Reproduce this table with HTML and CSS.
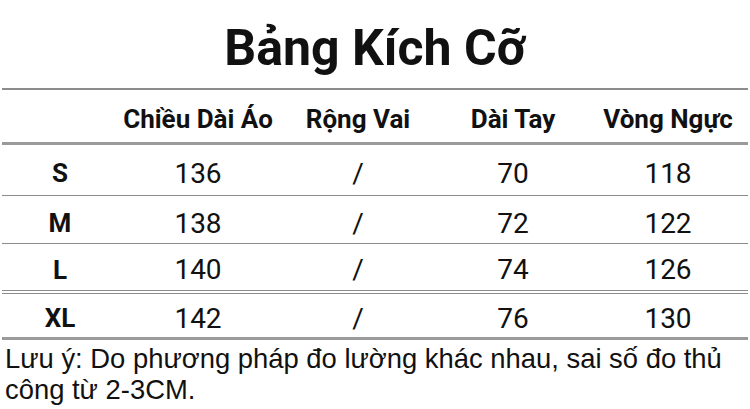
FILE: index.html
```html
<!DOCTYPE html>
<html lang="vi">
<head>
<meta charset="utf-8">
<title>Bảng Kích Cỡ</title>
<link rel="stylesheet" href="styles.css">
</head>
<body>
<div class="page">
  <h1 class="title">Bảng Kích Cỡ</h1>
  <div class="table">
    <div class="row row-head">
      <div class="cell"></div>
      <div class="cell">Chiều Dài Áo</div>
      <div class="cell">Rộng Vai</div>
      <div class="cell">Dài Tay</div>
      <div class="cell">Vòng Ngực</div>
    </div>
    <div class="row row-s">
      <div class="cell label">S</div>
      <div class="cell">136</div>
      <div class="cell">/</div>
      <div class="cell">70</div>
      <div class="cell">118</div>
    </div>
    <div class="row row-m">
      <div class="cell label">M</div>
      <div class="cell">138</div>
      <div class="cell">/</div>
      <div class="cell">72</div>
      <div class="cell">122</div>
    </div>
    <div class="row row-l">
      <div class="cell label">L</div>
      <div class="cell">140</div>
      <div class="cell">/</div>
      <div class="cell">74</div>
      <div class="cell">126</div>
    </div>
    <div class="row row-xl">
      <div class="cell label">XL</div>
      <div class="cell">142</div>
      <div class="cell">/</div>
      <div class="cell">76</div>
      <div class="cell">130</div>
    </div>
  </div>
  <p class="note">Lưu ý: Do phương pháp đo lường khác nhau, sai số đo thủ công từ 2-3CM.</p>
</div>
</body>
</html>
```

FILE: styles.css
```css
* { box-sizing: border-box; }
html, body { margin: 0; padding: 0; background: #fff; }
body {
  width: 750px;
  height: 409px;
  overflow: hidden;
  color: #111;
  font-family: Roboto, "Liberation Sans", sans-serif;
}
.page { width: 750px; }
.title {
  margin: 0;
  padding-top: 8px;
  height: 88px;
  line-height: 80px;
  font-size: 50px;
  font-weight: 700;
  text-align: center;
}
.table {
  margin: 0 2px;
  border-top: 2px solid #8c8c8c;
  border-bottom: 3px solid #9a9a9a;
}
.row {
  display: grid;
  grid-template-columns: 116px 160px 160px 150px 160px;
  align-items: center;
  font-size: 28px;
  font-weight: 400;
}
.cell { text-align: center; }
.label { font-weight: 700; font-size: 26px; }
.row-head {
  height: 55px;
  padding-top: 6px;
  font-size: 26px;
  font-weight: 700;
  border-bottom: 3px solid #9a9a9a;
}
.row-s { height: 51px; padding-top: 6px; border-bottom: 1px solid #8c8c8c; }
.row-m { height: 48px; padding-top: 7px; border-bottom: 1px solid #8c8c8c; }
.row-l { height: 50px; padding-top: 5px; border-bottom: 4px double #8c8c8c; }
.row-xl { height: 43px; padding-top: 5px; }
.note {
  margin: 0;
  padding: 3px 0 0 5px;
  font-family: "Liberation Sans", Arial, sans-serif;
  font-size: 27.4px;
  line-height: 31px;
  color: #111;
}
```
